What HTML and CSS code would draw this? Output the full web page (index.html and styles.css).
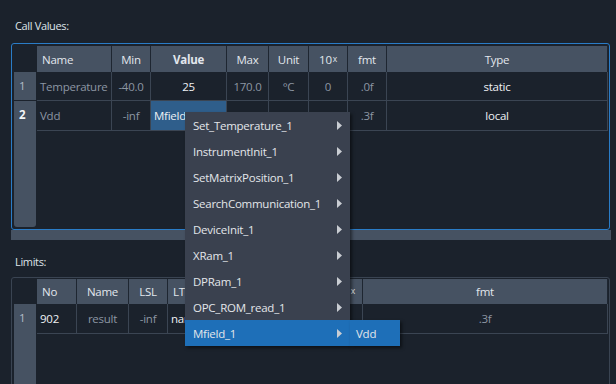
FILE: index.html
```html
<!DOCTYPE html>
<html>
<head>
<meta charset="utf-8">
<link rel="stylesheet" href="styles.css">
</head>
<body>
<div class="app">
  <div class="label label-call">Call Values:</div>
  <div class="box box-focus">
    <div class="tbl">
      <div class="vh">
        <div class="corner"></div>
        <div class="vh-body">
          <div class="vrow sep">1</div>
          <div class="vrow cur">2</div>
        </div>
      </div>
      <div class="grid grid-call">
        <div class="hc left">Name</div>
        <div class="hc">Min</div>
        <div class="hc bold">Value</div>
        <div class="hc">Max</div>
        <div class="hc">Unit</div>
        <div class="hc">10<sup>x</sup></div>
        <div class="hc">fmt</div>
        <div class="hc">Type</div>

        <div class="c left dim">Temperature</div>
        <div class="c dim">-40.0</div>
        <div class="c">25</div>
        <div class="c dim">170.0</div>
        <div class="c dim">°C</div>
        <div class="c dim">0</div>
        <div class="c dim">.0f</div>
        <div class="c">static</div>

        <div class="c left dim">Vdd</div>
        <div class="c dim">-inf</div>
        <div class="c left sel">Mfield_1.Vdd</div>
        <div class="c dim">inf</div>
        <div class="c dim">V</div>
        <div class="c dim">0</div>
        <div class="c dim">.3f</div>
        <div class="c">local</div>
      </div>
    </div>
  </div>
  <div class="hscroll"></div>

  <div class="label label-limits">Limits:</div>
  <div class="box box-plain">
    <div class="tbl">
      <div class="vh">
        <div class="corner"></div>
        <div class="vh-body">
          <div class="vrow">1</div>
        </div>
      </div>
      <div class="grid grid-limits">
        <div class="hc left">No</div>
        <div class="hc">Name</div>
        <div class="hc">LSL</div>
        <div class="hc left">LTL</div>
        <div class="hc">UTL</div>
        <div class="hc">USL</div>
        <div class="hc">Unit</div>
        <div class="hc">10<sup>x</sup></div>
        <div class="hc">fmt</div>

        <div class="c left">902</div>
        <div class="c dim">result</div>
        <div class="c dim">-inf</div>
        <div class="c left">nan</div>
        <div class="c dim">nan</div>
        <div class="c dim">inf</div>
        <div class="c dim">V</div>
        <div class="c dim">0</div>
        <div class="c dim">.3f</div>
      </div>
    </div>
  </div>
</div>

<div class="menu">
  <div class="mi"><span>Set_Temperature_1</span><svg class="arr" width="5" height="9" viewBox="0 0 5 9"><path d="M0 0L5 4.5L0 9Z"/></svg></div>
  <div class="mi"><span>InstrumentInit_1</span><svg class="arr" width="5" height="9" viewBox="0 0 5 9"><path d="M0 0L5 4.5L0 9Z"/></svg></div>
  <div class="mi"><span>SetMatrixPosition_1</span><svg class="arr" width="5" height="9" viewBox="0 0 5 9"><path d="M0 0L5 4.5L0 9Z"/></svg></div>
  <div class="mi"><span>SearchCommunication_1</span><svg class="arr" width="5" height="9" viewBox="0 0 5 9"><path d="M0 0L5 4.5L0 9Z"/></svg></div>
  <div class="mi"><span>DeviceInit_1</span><svg class="arr" width="5" height="9" viewBox="0 0 5 9"><path d="M0 0L5 4.5L0 9Z"/></svg></div>
  <div class="mi"><span>XRam_1</span><svg class="arr" width="5" height="9" viewBox="0 0 5 9"><path d="M0 0L5 4.5L0 9Z"/></svg></div>
  <div class="mi"><span>DPRam_1</span><svg class="arr" width="5" height="9" viewBox="0 0 5 9"><path d="M0 0L5 4.5L0 9Z"/></svg></div>
  <div class="mi"><span>OPC_ROM_read_1</span><svg class="arr" width="5" height="9" viewBox="0 0 5 9"><path d="M0 0L5 4.5L0 9Z"/></svg></div>
  <div class="mi hot"><span>Mfield_1</span><svg class="arr" width="5" height="9" viewBox="0 0 5 9"><path d="M0 0L5 4.5L0 9Z"/></svg></div>
</div>
<div class="submenu">
  <div class="mi hot"><span>Vdd</span></div>
</div>
</body>
</html>
```

FILE: styles.css
```css
html, body {
  margin: 0;
  padding: 0;
  background: #1b222c;
  width: 616px;
  height: 384px;
  overflow: hidden;
  font-family: "Open Sans", "Noto Sans", sans-serif;
  font-size: 11.5px;
  letter-spacing: -0.25px;
  color: #e1e6ec;
}

.app {
  display: flex;
  flex-direction: column;
  padding-left: 11px;
}

.label {
  height: 16px;
  line-height: 16px;
  padding-left: 4px;
  font-size: 11px;
  letter-spacing: -0.35px;
  color: #dfe4ea;
}
.label-call { margin-top: 18px; }
.label-limits { margin-top: 14px; }

.box {
  box-sizing: border-box;
  width: 599px;
  border-radius: 3px;
  padding: 2px 1px 2px 2px;
}
.box-focus {
  margin-top: 9px;
  height: 187px;
  border: 1px solid #2a7cc7;
}
.box-plain {
  margin-top: 7px;
  height: 140px;
  padding-top: 1px;
  border: 1px solid #3a4452;
}

.tbl {
  display: flex;
  height: 100%;
}

.vh {
  width: 22px;
  margin-right: 1px;
  display: flex;
  flex-direction: column;
}
.corner { height: 26px; flex: none; }
.box-plain .corner { height: 25px; }
.vh-body {
  flex: 1;
  background: #465262;
  border-radius: 0 0 3px 3px;
}
.vrow {
  height: 28px;
  line-height: 28px;
  padding-left: 5px;
  color: #b3bcc7;
}
.vrow.sep { border-bottom: 1px solid #1b222c; }
.vrow.cur { font-weight: bold; color: #f3f5f7; height: 29px; }

.grid {
  display: grid;
  align-content: start;
}
.grid-call {
  grid-template-columns: 75px 39px 76px 42px 40px 39px 39px 221px;
  grid-template-rows: 26px 29px 30px;
}
.grid-limits {
  grid-template-columns: 40px 52px 39px 47px 47px 38px 30px 33px 245px;
  grid-template-rows: 25px 30px;
}

.hc {
  background: #465262;
  border-right: 1px solid #1e2631;
  display: flex;
  align-items: center;
  justify-content: center;
  color: #e2e7ed;
  white-space: nowrap;
  overflow: hidden;
}
.hc:last-child { border-right: none; }
.hc.left { justify-content: flex-start; padding-left: 5px; }
.hc.bold { font-weight: bold; }
.hc sup { font-size: 8.5px; line-height: 1; margin-left: 1px; vertical-align: 4px; }

.c {
  border-right: 1px solid #3b4553;
  border-bottom: 1px solid #3b4553;
  display: flex;
  align-items: center;
  justify-content: center;
  white-space: nowrap;
  overflow: hidden;
  color: #eef1f4;
}
.c.left { justify-content: flex-start; padding-left: 3px; }
.c.dim { color: #8c96a3; }
.c.sel { background: #2f5e8b; border-right-color: #3b4553; padding-left: 3px; }

.hscroll {
  width: 600px;
  height: 10px;
  background: #465262;
}

.menu {
  position: absolute;
  left: 185px;
  top: 112px;
  width: 165px;
  background: #3a414f;
  box-shadow: 2px 2px 3px rgba(0, 0, 0, 0.5);
}
.submenu {
  position: absolute;
  left: 350px;
  top: 320px;
  width: 50px;
  background: #3a414f;
  box-shadow: 2px 2px 3px rgba(0, 0, 0, 0.5);
}
.mi {
  height: 26px;
  display: flex;
  align-items: center;
  justify-content: space-between;
  padding: 0 8px 0 8px;
  color: #e3e6ea;
  white-space: nowrap;
}
.submenu .mi { padding-left: 6px; }
.mi.hot { background: #1e6fb8; }
.arr { fill: #c9cdd3; flex: none; }
```
